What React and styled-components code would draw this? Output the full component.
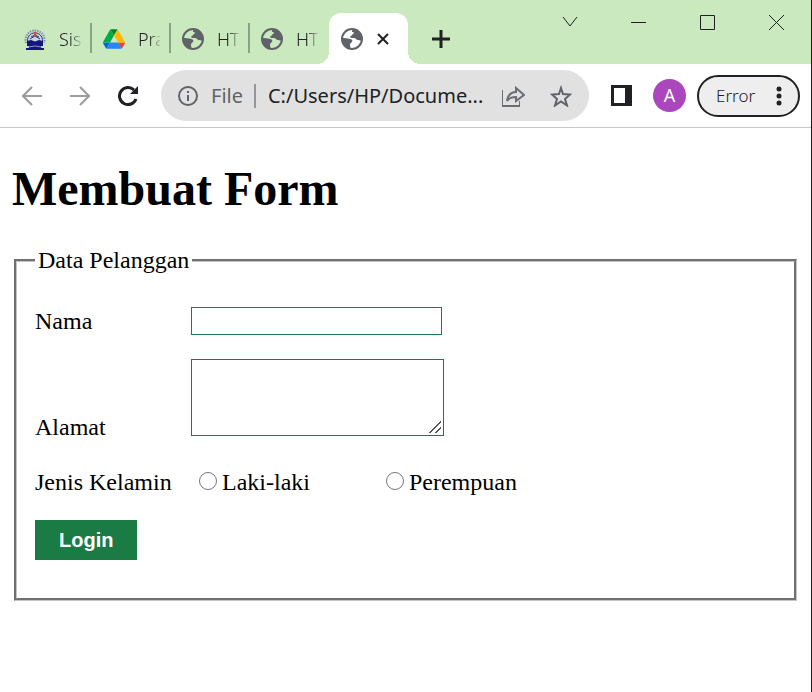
import React from "react";
import styled, { createGlobalStyle } from "styled-components";

const Global = createGlobalStyle`
  *, *::before, *::after { box-sizing: border-box; }
  body { margin: 0; background: #fff; color: #000; }
  button, input, textarea { font: inherit; margin: 0; }
`;

const ui = `"Noto Sans", "Open Sans", sans-serif`;

const Window = styled.div`
  display: flex;
  flex-direction: column;
  min-height: 100vh;
  border-right: 1px solid #1c1c1c;
  background: #fff;
`;

const TitleBar = styled.header`
  display: flex;
  align-items: flex-start;
  height: 64px;
  background: #cae9bf;
`;

const TabStrip = styled.nav`
  display: flex;
  align-items: flex-end;
  flex: 1;
  min-width: 0;
  padding: 13px 0 0 13px;
`;

const Tab = styled.button`
  display: flex;
  align-items: center;
  gap: 13px;
  width: 79px;
  height: 51px;
  padding: 0 11px;
  border: 0;
  background: none;
  color: #202124;
  font: 300 18px/24px ${ui};
  position: relative;
  svg { flex: none; }
`;

const Divided = styled(Tab)`
  background: linear-gradient(#8ba184, #8ba184) right 0 top 10px / 2px 30px no-repeat;
`;

const TabTitle = styled.span`
  overflow: hidden;
  white-space: nowrap;
  mask-image: linear-gradient(90deg, #000 50%, transparent 110%);
`;

const ActiveTab = styled(Tab)`
  border-radius: 12px 12px 0 0;
  background: #fff;
  padding: 0 12px;
  &::before, &::after {
    content: "";
    position: absolute;
    bottom: 0;
    width: 12px;
    height: 12px;
  }
  &::before { right: 100%; background: radial-gradient(circle at 0 0, transparent 12px, #fff 12px); }
  &::after { left: 100%; background: radial-gradient(circle at 100% 0, transparent 12px, #fff 12px); }
`;

const IconButton = styled.button`
  display: grid;
  place-items: center;
  flex: none;
  width: ${(p) => p.$w || 48}px;
  height: ${(p) => p.$h || 48}px;
  padding: 0;
  border: 0;
  background: none;
  color: ${(p) => p.$color || "#202124"};
`;

const WindowControls = styled.div`
  display: flex;
`;

const Toolbar = styled.div`
  display: flex;
  align-items: center;
  height: 64px;
  padding: 0 11px 0 8px;
  border-bottom: 1px solid #c8c8c8;
  font: 20px/28px ${ui};
`;

const AddressBar = styled.div`
  display: flex;
  align-items: center;
  flex: 1;
  min-width: 0;
  height: 51px;
  margin-left: 9px;
  padding: 0 4px 0 16px;
  border-radius: 26px;
  background: #e1e1e1;
  color: #5f6368;
`;

const Scheme = styled.span`
  margin-left: 12px;
  padding-right: 11px;
`;

const Separator = styled.span`
  width: 2px;
  height: 24px;
  background: #949698;
`;

const Address = styled.input`
  flex: 1;
  min-width: 0;
  margin-left: 12px;
  padding: 0;
  border: 0;
  outline: 0;
  background: none;
  color: #202124;
`;

const Avatar = styled.button`
  width: 33px;
  height: 33px;
  margin-right: 11px;
  padding: 0;
  border: 0;
  border-radius: 50%;
  background: #ab47bc;
  color: #fff;
  font: 18px/33px ${ui};
`;

const ErrorButton = styled.button`
  display: flex;
  align-items: center;
  justify-content: space-between;
  width: 103px;
  height: 42px;
  padding: 0 17px;
  border: 2px solid #202124;
  border-radius: 21px;
  background: #eee;
  color: #202124;
  font: 300 17px/24px ${ui};
`;

const Page = styled.main`
  padding: 33px 14px;
  font: 24px/27px "Liberation Serif", "Times New Roman", serif;
`;

const Title = styled.h1`
  margin: 0 0 30px;
  font-size: 48px;
  line-height: 56px;
  text-indent: -2px;
`;

const Group = styled.fieldset`
  display: flex;
  flex-direction: column;
  align-items: flex-start;
  gap: 24px;
  min-width: 0;
  margin: 0;
  padding: 33px 18px 38px;
  border: 3px groove #c4c4c4;
`;

const Legend = styled.legend`
  padding: 0 3px;
`;

const Row = styled.div`
  display: flex;
  align-items: ${(p) => p.$align || "center"};
`;

const ChoiceRow = styled(Row)`
  padding-top: 4px;
`;

const Label = styled.label`
  width: 156px;
`;

const TextInput = styled.input`
  width: 251px;
  height: 28px;
  padding: 0 3px;
  border: 1px solid #1b7b44;
  font: 20px/24px "Liberation Sans", Arial, sans-serif;
`;

const TextArea = styled.textarea`
  width: 253px;
  height: 77px;
  margin-bottom: 5px;
  padding: 3px;
  border: 1px solid #1b7b44;
  font: 20px/24px "Liberation Sans", Arial, sans-serif;
  &::-webkit-resizer {
    background: linear-gradient(135deg, transparent 48%, #555 48%, #555 56%, transparent 56%, transparent 74%, #555 74%, #555 82%, transparent 82%) 1px 1px / 12px 12px no-repeat;
  }
`;

const RadioGroup = styled.div`
  display: flex;
  gap: 76px;
  padding-left: 8px;
`;

const Choice = styled.label`
  display: flex;
  align-items: center;
  gap: 5px;
`;

const Radio = styled.input`
  appearance: none;
  width: 18px;
  height: 18px;
  margin-bottom: 4px;
  border: 1px solid #767676;
  border-radius: 50%;
  background: #fff;
  &:checked { background: radial-gradient(circle, #1b7b44 5px, #fff 6px); }
`;

const Submit = styled.button`
  height: 40px;
  padding: 0 24px;
  border: 0;
  background: #1b7b44;
  color: #fff;
  font: bold 20px/24px "Liberation Sans", Arial, sans-serif;
`;

const Globe = () => (
  <svg width="22" height="22" viewBox="0 0 22 22">
    <circle cx="11" cy="11" r="10" fill="none" stroke="#5f6368" strokeWidth="2" />
    <path fill="#5f6368" d="M12 1c-1 1-1 2-1 3 1 0 2 0 2 1s-2 1-2 2-2 1-2 2 2 1 4 1 2 2 4 2 3 1 4 1C20 6 17 1 12 1zM1 10c2 0 6 0 8 1 2 0 3 2 2 3s-2 1-2 3 1 2 0 4C4 20 0 15 1 10z" />
  </svg>
);

const Campus = () => (
  <svg width="22" height="24" viewBox="0 0 22 24">
    <path d="M2 16a9.500 9.500 0 1 1 18 0" fill="none" stroke="#7d8fae" strokeWidth="2" strokeDasharray="1.5 1" />
    <path d="M4 16a7.500 7.500 0 1 1 14 0" fill="#c9d5df" stroke="#28327e" />
    <path d="M6 12l5-3 5 3M7 10l4-2 4 2" fill="none" stroke="#28327e" />
    <path d="M3 14l4-1 4 1.500 4-1.500 4 1v5H3z" fill="#15157e" />
    <path d="M5 19h12v2H5zM2 21h18v2H2z" fill="#15157e" />
    <path d="M4 20l7-1 7 1" fill="none" stroke="#8d96bd" />
    <path d="M11 4c2 2 2 4 0 6-2-2-1-3 0-6z" fill="#e5482f" />
  </svg>
);

const Drive = () => (
  <svg width="22" height="20" viewBox="0 0 87.3 78">
    <path d="m6.6 66.85 3.85 6.65c.8 1.4 1.95 2.5 3.3 3.3l13.75-23.8h-27.5c0 1.55.4 3.1 1.2 4.5z" fill="#0066da" />
    <path d="m43.65 25-13.75-23.8c-1.35.8-2.5 1.9-3.3 3.3l-25.4 44a9.06 9.06 0 0 0 -1.2 4.5h27.5z" fill="#00ac47" />
    <path d="m73.55 76.8c1.35-.8 2.5-1.9 3.3-3.3l1.6-2.75 7.65-13.25c.8-1.4 1.2-2.95 1.2-4.5h-27.502l5.852 11.5z" fill="#ea4335" />
    <path d="m43.65 25 13.75-23.8c-1.35-.8-2.9-1.2-4.5-1.2h-18.5c-1.6 0-3.15.45-4.5 1.2z" fill="#00832d" />
    <path d="m59.8 53h-32.3l-13.75 23.8c1.35.8 2.9 1.2 4.5 1.2h50.8c1.6 0 3.15-.45 4.5-1.2z" fill="#2684fc" />
    <path d="m73.4 26.5-12.7-22c-.8-1.4-1.95-2.5-3.3-3.3l-13.75 23.8 16.15 28h27.45c0-1.55-.4-3.1-1.2-4.5z" fill="#ffba00" />
  </svg>
);

const Line = ({ d, w = 20, h = 20, sw = 2, children }) => (
  <svg width={w} height={h} viewBox={`0 0 ${w} ${h}`} fill="none" stroke="currentColor" strokeWidth={sw}>
    <path d={d} />
    {children}
  </svg>
);

export default function App() {
  return (
    <Window>
      <Global />
      <TitleBar>
        <TabStrip aria-label="Tab">
          <Divided><Campus /><TabTitle>Sis</TabTitle></Divided>
          <Divided><Drive /><TabTitle>Pra</TabTitle></Divided>
          <Divided><Globe /><TabTitle>HT</TabTitle></Divided>
          <Tab><Globe /><TabTitle>HT</TabTitle></Tab>
          <ActiveTab aria-label="Membuat Form">
            <Globe />
            <Line w={14} h={14} sw={2} d="M2 2l10 10M12 2L2 12" />
          </ActiveTab>
          <IconButton $w={66} $h={51} aria-label="Tab baru">
            <Line w={18} h={18} sw={3} d="M9 0v18M0 9h18" />
          </IconButton>
        </TabStrip>
        <WindowControls>
          <IconButton $w={69} $h={44} aria-label="Cari tab"><Line w={16} h={10} sw={1} d="M1 0l7 9 7-9" /></IconButton>
          <IconButton $w={69} $h={44} aria-label="Minimalkan"><Line w={15} h={15} sw={1} d="M0 7.5h15" /></IconButton>
          <IconButton $w={69} $h={44} aria-label="Maksimalkan"><Line w={15} h={15} sw={1} d="M.5.5h14v14H.5z" /></IconButton>
          <IconButton $w={69} $h={44} aria-label="Tutup"><Line w={15} h={15} sw={1} d="M0 0l15 15M15 0L0 15" /></IconButton>
        </WindowControls>
      </TitleBar>
      <Toolbar>
        <IconButton $color="#9b9b9b" aria-label="Kembali"><Line d="M20 10H1M10 1L1 10l9 9" /></IconButton>
        <IconButton $color="#9b9b9b" aria-label="Maju"><Line d="M0 10h19M10 1l9 9-9 9" /></IconButton>
        <IconButton aria-label="Muat ulang">
          <Line w={22} h={22} sw={3} d="M19 14a8.500 8.500 0 1 1-2-9">
            <path d="M21 1v8h-8z" fill="currentColor" stroke="none" />
          </Line>
        </IconButton>
        <AddressBar>
          <Line w={22} h={22} d="M11 10v6M11 6v2"><circle cx="11" cy="11" r="9" /></Line>
          <Scheme>File</Scheme>
          <Separator />
          <Address aria-label="Alamat situs" readOnly value="C:/Users/HP/Docume..." />
          <IconButton $color="#6b6e72" aria-label="Bagikan">
            <Line w={24} h={22} sw={1} d="M1.500 5v16h17v-5">
              <path strokeWidth="2" d="M6 16c1-6 4-9 9-9V3l8 7-8 6v-4c-4 0-7 1-9 4z" />
              <path d="M1 21h18" strokeWidth="2" />
            </Line>
          </IconButton>
          <IconButton $color="#5f6368" aria-label="Markah">
            <Line w={22} h={22} sw={2} d="M11 3l2 6 7 .5-5 4.500 2 6.500-6-4-6 4 2-6.500-5-4.500 7-.5z" />
          </IconButton>
        </AddressBar>
        <IconButton $w={64} aria-label="Panel samping">
          <Line w={21} h={21} sw={3} d="M1.500 1.500h18v18h-18z"><path d="M14 1h6v19h-6z" fill="currentColor" stroke="none" /></Line>
        </IconButton>
        <Avatar aria-label="Profil">A</Avatar>
        <ErrorButton>
          Error
          <svg width="4" height="20" viewBox="0 0 4 20" fill="currentColor" overflow="visible">
            <circle cx="2" cy="3" r="2.500" /><circle cx="2" cy="10" r="2.500" /><circle cx="2" cy="17" r="2.500" />
          </svg>
        </ErrorButton>
      </Toolbar>
      <Page>
        <Title>Membuat Form</Title>
        <form onSubmit={(e) => e.preventDefault()}>
          <Group>
            <Legend>Data Pelanggan</Legend>
            <Row>
              <Label htmlFor="nama">Nama</Label>
              <TextInput id="nama" name="nama" type="text" />
            </Row>
            <Row $align="flex-end">
              <Label htmlFor="alamat">Alamat</Label>
              <TextArea id="alamat" name="alamat" />
            </Row>
            <ChoiceRow>
              <Label as="span" id="kelamin">Jenis Kelamin</Label>
              <RadioGroup role="radiogroup" aria-labelledby="kelamin">
                <Choice><Radio type="radio" name="kelamin" value="l" />Laki-laki</Choice>
                <Choice><Radio type="radio" name="kelamin" value="p" />Perempuan</Choice>
              </RadioGroup>
            </ChoiceRow>
            <Submit type="submit">Login</Submit>
          </Group>
        </form>
      </Page>
    </Window>
  );
}
